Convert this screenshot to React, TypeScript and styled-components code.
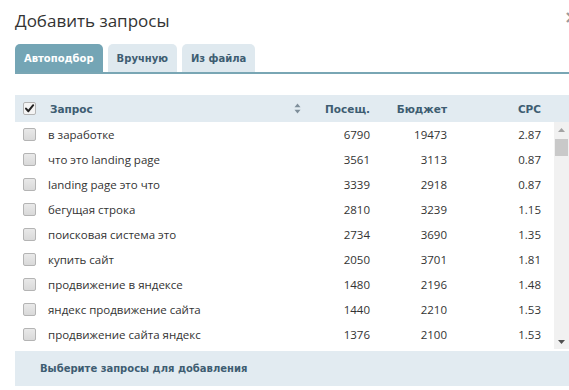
import { createGlobalStyle, styled } from 'styled-components';

const GlobalStyle = createGlobalStyle`
  html, body {
    margin: 0;
    padding: 0;
    background: #fff;
    overflow: hidden;
  }
`;

type Query = { text: string; visits: number; budget: number; cpc: string };

const rows: Query[] = [
  { text: 'в заработке', visits: 6790, budget: 19473, cpc: '2.87' },
  { text: 'что это landing page', visits: 3561, budget: 3113, cpc: '0.87' },
  { text: 'landing page это что', visits: 3339, budget: 2918, cpc: '0.87' },
  { text: 'бегущая строка', visits: 2810, budget: 3239, cpc: '1.15' },
  { text: 'поисковая система это', visits: 2734, budget: 3690, cpc: '1.35' },
  { text: 'купить сайт', visits: 2050, budget: 3701, cpc: '1.81' },
  { text: 'продвижение в яндексе', visits: 1480, budget: 2196, cpc: '1.48' },
  { text: 'яндекс продвижение сайта', visits: 1440, budget: 2210, cpc: '1.53' },
  { text: 'продвижение сайта яндекс', visits: 1376, budget: 2100, cpc: '1.53' },
];

const Checkbox = ({ checked }: { checked?: boolean }) => (
  <S.Check $checked={checked}>
    {checked && (
      <svg width="11" height="11" viewBox="0 0 11 11">
        <path d="M2 5.6 L4.4 8.2 L9.2 2.2" fill="none" stroke="#222" strokeWidth="2" strokeLinecap="round" strokeLinejoin="round" />
      </svg>
    )}
  </S.Check>
);

const SortIcon = () => (
  <svg width="7" height="11" viewBox="0 0 7 11">
    <path d="M3.5 0.5 L6.5 4.2 L0.5 4.2 Z" fill="#7e8e9a" />
    <path d="M3.5 10.5 L6.5 6.8 L0.5 6.8 Z" fill="#7e8e9a" />
  </svg>
);

const Arrow = ({ down, color }: { down?: boolean; color: string }) => (
  <svg width="7" height="4" viewBox="0 0 7 4">
    <path d={down ? 'M0 0 L7 0 L3.5 4 Z' : 'M0 4 L7 4 L3.5 0 Z'} fill={color} />
  </svg>
);

const tabs = ['Автоподбор', 'Вручную', 'Из файла'];

const App = () => {
  return (
    <>
      <GlobalStyle />
      <S.Dialog>
        <S.TitleRow>
          <S.Title>Добавить запросы</S.Title>
          <S.Close>×</S.Close>
        </S.TitleRow>
        <S.Tabs>
          {tabs.map((tab, i) => (
            <S.Tab key={tab} $active={i === 0}>
              {tab}
            </S.Tab>
          ))}
        </S.Tabs>
        <S.Table>
          <S.HeadRow>
            <S.CheckCell>
              <Checkbox checked />
            </S.CheckCell>
            <S.HeadQuery>
              Запрос
              <SortIcon />
            </S.HeadQuery>
            <S.HeadNum>Посещ.</S.HeadNum>
            <S.HeadNum>Бюджет</S.HeadNum>
            <S.HeadNum>CPC</S.HeadNum>
          </S.HeadRow>
          <S.BodyWrap>
            <S.Body>
              {rows.map((row) => (
                <S.Row key={row.text}>
                  <S.CheckCell>
                    <Checkbox />
                  </S.CheckCell>
                  <S.QueryCell>{row.text}</S.QueryCell>
                  <S.NumCell>{row.visits}</S.NumCell>
                  <S.NumCell>{row.budget}</S.NumCell>
                  <S.NumCell>{row.cpc}</S.NumCell>
                </S.Row>
              ))}
            </S.Body>
            <S.Scrollbar>
              <S.ScrollButton>
                <Arrow color="#a3a3a3" />
              </S.ScrollButton>
              <S.Thumb />
              <S.ScrollButton $bottom>
                <Arrow down color="#505050" />
              </S.ScrollButton>
            </S.Scrollbar>
          </S.BodyWrap>
          <S.Footer>Выберите запросы для добавления</S.Footer>
        </S.Table>
      </S.Dialog>
    </>
  );
};

const columns = '30px 1fr 61px 77px 94px';

const S = {
  Dialog: styled.div`
    width: 554px;
    height: 390px;
    padding-left: 15px;
    overflow: hidden;
  `,

  TitleRow: styled.div`
    display: flex;
    justify-content: space-between;
    align-items: flex-start;

    height: 44px;
  `,

  Title: styled.h1`
    margin: 8px 0 0;

    color: #333;
    font-family: 'Open Sans', sans-serif;
    font-size: 17px;
    font-weight: 400;
    line-height: 26px;
  `,

  Close: styled.span`
    margin: 7px -10px 0 0;

    color: #9a9a9a;
    font-family: 'DejaVu Sans', sans-serif;
    font-size: 18px;
    font-weight: 700;
    line-height: 20px;
  `,

  Tabs: styled.div`
    display: flex;
    gap: 5px;

    height: 28px;
    border-bottom: 2px solid #79a6b4;
  `,

  Tab: styled.div<{ $active?: boolean }>`
    display: flex;
    align-items: center;
    padding: 0 9px;

    border-radius: 5px 5px 0 0;
    background: ${({ $active }) => ($active ? '#74a5b5' : '#dfe9ef')};
    color: ${({ $active }) => ($active ? '#fff' : '#3e5d72')};

    font-family: 'DejaVu Sans', sans-serif;
    font-size: 10px;
    font-weight: 700;
  `,

  Table: styled.div`
    display: flex;
    flex-direction: column;

    margin-top: 21px;
  `,

  HeadRow: styled.div`
    display: grid;
    grid-template-columns: ${columns};
    align-items: center;

    height: 27px;
    padding-right: 28px;

    background: #e2ebf1;
    color: #3e5d72;

    font-family: 'DejaVu Sans', sans-serif;
    font-size: 10.5px;
    font-weight: 700;
  `,

  HeadQuery: styled.div`
    display: flex;
    justify-content: space-between;
    align-items: center;

    padding: 0 8px 0 5px;
  `,

  HeadNum: styled.div`
    text-align: right;
  `,

  BodyWrap: styled.div`
    display: flex;

    height: 227px;
  `,

  Body: styled.div`
    flex: 1;
    overflow: hidden;
  `,

  Row: styled.div`
    display: grid;
    grid-template-columns: ${columns};
    align-items: center;

    height: 25px;
    padding-right: 13px;

    color: #333;
    font-family: 'Open Sans', sans-serif;
    font-size: 11.5px;
  `,

  CheckCell: styled.div`
    display: flex;
    align-items: center;

    padding-left: 8px;
  `,

  QueryCell: styled.div`
    padding-left: 3px;
    white-space: nowrap;
  `,

  NumCell: styled.div`
    text-align: right;
  `,

  Check: styled.span<{ $checked?: boolean }>`
    display: flex;
    align-items: center;
    justify-content: center;

    box-sizing: border-box;
    width: 13px;
    height: 13px;

    border: 1px solid #b4b4b4;
    border-radius: 2px;
    background: ${({ $checked }) => ($checked ? '#f4f4f4' : 'linear-gradient(#e9e9e9, #d9d9d9)')};
  `,

  Scrollbar: styled.div`
    display: flex;
    flex-direction: column;

    width: 15px;
    background: #f1f1f1;
  `,

  ScrollButton: styled.div<{ $bottom?: boolean }>`
    display: flex;
    align-items: center;
    justify-content: center;

    height: 15px;
    margin-top: ${({ $bottom }) => ($bottom ? 'auto' : '0')};
  `,

  Thumb: styled.div`
    height: 17px;
    margin: 2px 1px 0;

    background: #c9c9c9;
  `,

  Footer: styled.div`
    display: flex;
    align-items: center;

    height: 35px;
    margin-top: 2px;
    padding-left: 25px;

    background: #e2ebf1;
    color: #3e5d72;

    font-family: 'DejaVu Sans', sans-serif;
    font-size: 10px;
    font-weight: 700;
  `,
};

export default App;
